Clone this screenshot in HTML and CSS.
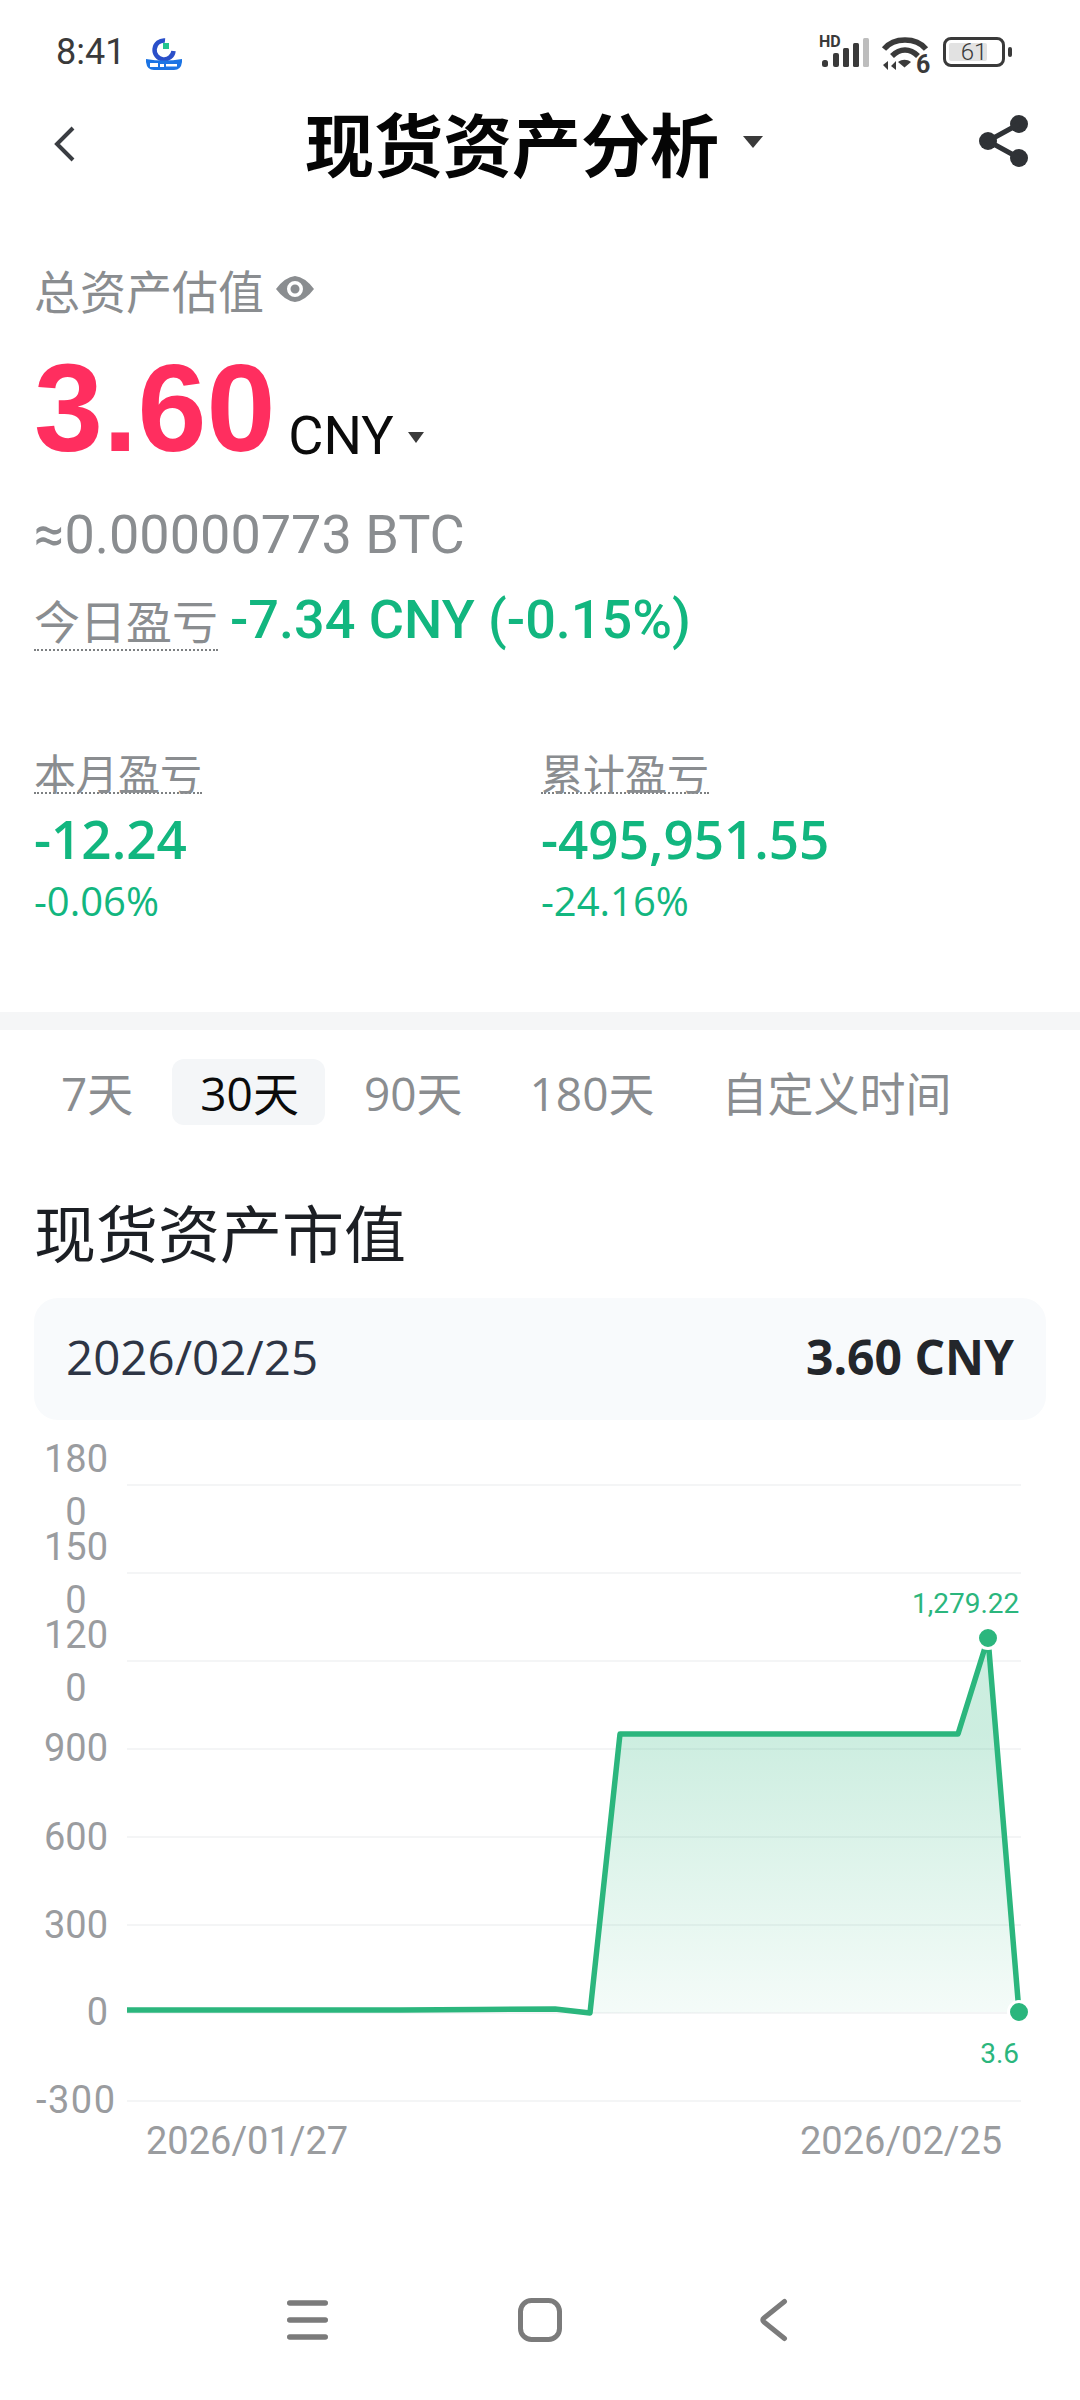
FILE: index.html
```html
<!DOCTYPE html>
<html lang="zh">
<head>
<meta charset="utf-8">
<title>现货资产分析</title>
<link rel="stylesheet" href="styles.css">
</head>
<body>
<div class="phone">
  <div class="status">
    <div class="status-left">
      <span class="clock">8:41</span>
      <svg class="applogo" width="38" height="33" viewBox="0 0 38 33"><path d="M20 3.500A9.500 9.500 0 1 0 28.500 14" fill="none" stroke="#2a4fc9" stroke-width="4.500"/><rect x="18" y="6" width="6" height="6" fill="#25c48e"/><path d="M1 22q18 3 36 0v3q-1 8-8 8H9q-7 0-8-8z" fill="#1b74e4"/><g fill="#fff"><rect x="5" y="26" width="8" height="4"/><rect x="15" y="27" width="4" height="3"/><rect x="21" y="27" width="11" height="2.500"/></g></svg>
    </div>
    <div class="status-right">
      <svg class="sig" width="52" height="36" viewBox="0 -4 52 36"><text x="1" y="10" class="hd">HD</text><g fill="#3a3a3a"><rect x="4" y="23" width="6" height="7" rx="2.500"/><rect x="15" y="16" width="6" height="14" rx="2"/><rect x="25" y="11" width="6" height="19" rx="1.500"/><rect x="35" y="6" width="6" height="24" rx="1.500"/></g><rect x="45" y="1" width="6" height="29" rx="1.500" fill="#bdbdbd"/></svg>
      <svg class="wifi" width="52" height="46" viewBox="0 0 52 46"><g fill="none" stroke="#3a3a3a" stroke-width="5.500"><path d="M4 14C14 2 36 2 46 14"/><path d="M12 21C20 13 30 13 38 21"/></g><path d="M18 27c4-3 9-3 13 0l-6.500 5.500z" fill="#3a3a3a"/><path d="M3 30l5-4v9zM16 26v9l-5-4z" fill="#3a3a3a"/><text x="36" y="38" class="six">6</text></svg>
      <div class="battery"><div class="batt-body"><span class="batt-fill"></span><span class="batt-num">61</span></div><span class="batt-tip"></span></div>
    </div>
  </div>

  <header class="nav">
    <svg class="back" width="24" height="38" viewBox="0 0 24 38"><path d="M21 3L5 19l16 16" fill="none" stroke="#3a3d42" stroke-width="4"/></svg>
    <div class="nav-title"><h1>现货资产分析</h1><span class="caret caret-title"></span></div>
    <svg class="share" width="50" height="54" viewBox="0 0 50 54"><g fill="#2f3236"><circle cx="40" cy="9" r="9"/><circle cx="9" cy="26" r="9"/><circle cx="40" cy="43" r="9"/></g><path d="M40 9L9 26l31 17" fill="none" stroke="#2f3236" stroke-width="5"/></svg>
  </header>

  <section class="summary">
    <div class="label-row"><span class="muted-label">总资产估值</span>
      <svg class="eye" width="38" height="26" viewBox="0 0 38 26"><path fill-rule="evenodd" d="M0 13Q9 1 19 0q10 1 19 13-9 12-19 13Q9 25 0 13zm19-8a8 8 0 1 0 0 16 8 8 0 0 0 0-16zm0 3.500a4.500 4.500 0 1 1 0 9 4.500 4.500 0 0 1 0-9z" fill="#8a8d90"/></svg>
    </div>
    <div class="value-row"><span class="big">3.60</span><span class="unit">CNY</span><span class="caret caret-unit"></span></div>
    <div class="btc">≈0.00000773 BTC</div>
    <div class="today"><span class="dotted today-label">今日盈亏</span><span class="today-val">-7.34 CNY (-0.15%)</span></div>
    <div class="pnl-grid">
      <div class="pnl">
        <span class="dotted pnl-label">本月盈亏</span>
        <span class="pnl-val">-12.24</span>
        <span class="pnl-pct">-0.06%</span>
      </div>
      <div class="pnl">
        <span class="dotted pnl-label">累计盈亏</span>
        <span class="pnl-val">-495,951.55</span>
        <span class="pnl-pct">-24.16%</span>
      </div>
    </div>
  </section>

  <div class="divider"></div>

  <nav class="tabs">
    <span class="tab">7天</span>
    <span class="tab active">30天</span>
    <span class="tab">90天</span>
    <span class="tab">180天</span>
    <span class="tab">自定义时间</span>
  </nav>

  <section class="market">
    <h2>现货资产市值</h2>
    <div class="date-card"><span class="date">2026/02/25</span><span class="amount">3.60 CNY</span></div>
    <div class="chart">
      <svg class="plot" width="1080" height="760" viewBox="0 0 1080 760">
        <defs><linearGradient id="area" gradientUnits="userSpaceOnUse" x1="0" y1="314" x2="0" y2="593"><stop offset="0" stop-color="#2bb67d" stop-opacity=".24"/><stop offset="1" stop-color="#2bb67d" stop-opacity=".05"/></linearGradient></defs>
        <path d="M127 65H1021M127 153H1021M127 241H1021M127 329H1021M127 417H1021M127 505H1021M127 593H1021M127 681H1021" stroke="#f4f5f6" stroke-width="2" fill="none"/>
        <path d="M590 593L620 314H958L988 218L1019 592z" fill="url(#area)"/>
        <path d="M127 590H400L480 589.500L555 589L590 593L620 314H958L988 218L1019 592" fill="none" stroke="#2bb67d" stroke-width="5.500" stroke-linejoin="round"/>
        <circle cx="988" cy="218" r="10.500" fill="#2bb67d" stroke="#fff" stroke-width="3"/>
        <circle cx="1019" cy="592" r="10.500" fill="#2bb67d" stroke="#fff" stroke-width="3"/>
      </svg>
      <span class="yl yl-wrap yl-1">180<br>0</span>
      <span class="yl yl-wrap yl-2">150<br>0</span>
      <span class="yl yl-wrap yl-3">120<br>0</span>
      <span class="yl yl-4">900</span>
      <span class="yl yl-5">600</span>
      <span class="yl yl-6">300</span>
      <span class="yl yl-7">0</span>
      <span class="yl yl-8">-300</span>
      <span class="peak">1,279.22</span>
      <span class="low">3.6</span>
      <span class="xl xl-a">2026/01/27</span>
      <span class="xl xl-b">2026/02/25</span>
    </div>
  </section>

  <footer class="softkeys">
    <svg class="key-menu" width="46" height="46" viewBox="0 0 46 46"><path d="M5.750 6H41.250M5.750 23H41.250M5.750 40H41.250" stroke="#7b7b7b" stroke-width="5.500" stroke-linecap="round" fill="none"/></svg>
    <svg class="key-home" width="44" height="46" viewBox="0 0 44 46"><rect x="2.500" y="3.500" width="39" height="39" rx="11" fill="none" stroke="#7b7b7b" stroke-width="5"/></svg>
    <svg class="key-back" width="30" height="46" viewBox="0 0 30 46"><path d="M26.500 4.500L6 21q-2.500 2 0 4L26.500 41.500" fill="none" stroke="#7b7b7b" stroke-width="5" stroke-linecap="round"/></svg>
  </footer>
</div>
</body>
</html>
```

FILE: styles.css
```css
* { box-sizing: border-box; }
html, body { margin: 0; padding: 0; background: #fff; }
body { font-family: "Liberation Sans", "Noto Sans CJK SC", sans-serif; }
h1, h2 { margin: 0; }
.phone { width: 1080px; height: 2400px; display: flex; flex-direction: column; overflow: hidden; background: #fff; }

.status { height: 92px; flex: none; padding: 30px 68px 0 56px; display: flex; justify-content: space-between; align-items: flex-start; }
.status-left { display: flex; align-items: center; gap: 20px; }
.clock { font: 400 36px/44px Roboto, sans-serif; color: #3a3a3a; }
.applogo { margin-top: 3px; }
.status-right { display: flex; align-items: flex-start; margin-top: 5px; height: 42px; }
.sig { margin-top: -2px; }
.wifi { margin-left: 10px; }
.hd { font: 700 16px Roboto, sans-serif; fill: #3a3a3a; }
.six { font: 700 25px Roboto, sans-serif; fill: #3a3a3a; }
.battery { display: flex; align-items: center; gap: 3px; margin: 2px 0 0 11px; }
.batt-body { width: 62px; height: 30px; border: 3px solid #3a3a3a; border-radius: 8px; position: relative; display: flex; align-items: center; justify-content: center; }
.batt-fill { position: absolute; left: 3px; top: 3px; bottom: 3px; width: 38px; background: #e2e2e2; border-radius: 2px; }
.batt-num { position: relative; font: 300 24px/24px Roboto, sans-serif; color: #3a3a3a; }
.batt-tip { width: 4px; height: 10px; background: #3a3a3a; border-radius: 2px; }

.nav { height: 106px; flex: none; padding: 0 51px 0 52px; display: flex; align-items: center; }
.back { flex: none; margin-top: -2px; }
.nav-title { display: flex; align-items: center; gap: 24px; margin-left: 229px; }
.nav h1 { font: 700 69px/84px "Noto Sans CJK SC", sans-serif; color: #050505; margin-top: -6px; }
.caret { display: inline-block; width: 0; height: 0; border-left: 10px solid transparent; border-right: 10px solid transparent; border-top: 12px solid #3a3a3a; }
.caret-title { margin-top: -6px; }
.share { flex: none; margin-left: auto; margin-top: -6px; }

.summary { padding: 61px 34px 0; display: flex; flex-direction: column; flex: none; }
.label-row { display: flex; align-items: center; gap: 12px; height: 60px; }
.muted-label { font: 400 46px/60px "Noto Sans CJK SC", sans-serif; color: #8a8d90; }
.value-row { display: flex; align-items: flex-end; height: 120px; margin-top: 29px; }
.big { font: 700 124px/120px "Liberation Sans", sans-serif; color: #ff2e5f; }
.unit { font: 400 54px/60px Roboto, sans-serif; color: #0b0b0b; margin: 0 0 2px 13px; }
.caret-unit { margin: 0 0 25px 14px; border-left-width: 8px; border-right-width: 8px; border-top-width: 11px; }
.btc { font: 400 54px/64px Roboto, sans-serif; color: #8a8d90; margin-top: 35px; }
.today { display: flex; align-items: center; gap: 12px; margin-top: 21px; height: 64px; }
.today-label { font: 400 46px/60px "Noto Sans CJK SC", sans-serif; color: #8a8d90; }
.today-val { font: 500 54px/60px Roboto, sans-serif; color: #12b67f; }
.dotted { border-bottom: 2px dotted #7d8082; }
.pnl-grid { display: grid; grid-template-columns: 507px 1fr; margin-top: 100px; }
.pnl { display: flex; flex-direction: column; align-items: flex-start; }
.pnl-label { font: 400 42px/40px "Noto Sans CJK SC", sans-serif; color: #8a8d90; }
.pnl-val { font: 600 53px/64px "Open Sans", sans-serif; color: #12b67f; margin-top: 13px; }
.pnl-pct { font: 400 40px/48px "Open Sans", sans-serif; color: #12b67f; margin-top: 6px; }

.divider { height: 18px; background: #f5f6f7; margin-top: 87px; flex: none; }

.tabs { display: flex; align-items: center; gap: 11px; height: 66px; flex: none; margin-top: 29px; padding-left: 33px; font-family: "Open Sans", "Noto Sans CJK SC", sans-serif; font-size: 46px; color: #8a8d90; }
.tab { height: 66px; line-height: 68px; padding: 0 28px; border-radius: 12px; white-space: nowrap; }
.tab.active { background: #f4f6f8; color: #0b0b0b; padding-right: 26px; }

.market { padding: 0 34px; display: flex; flex-direction: column; flex: none; }
.market h2 { font: 400 62px/80px "Noto Sans CJK SC", sans-serif; color: #1c1f24; margin-top: 66px; }
.date-card { height: 122px; background: #f8fafc; border-radius: 24px; margin-top: 27px; padding: 0 32px 4px; display: flex; align-items: center; justify-content: space-between; }
.date { font: 400 47.500px/60px "Open Sans", sans-serif; color: #2e3545; }
.amount { font: 700 48px/60px "Open Sans", sans-serif; color: #23262b; }
.chart { position: relative; height: 760px; margin: 0 -34px; }
.plot { display: block; }
.yl, .peak, .low, .xl { position: absolute; }
.yl { left: 36px; width: 72px; text-align: right; font: 400 38px/44px Roboto, sans-serif; color: #9a9c9f; }
.yl-wrap { left: 44px; width: 64px; text-align: center; line-height: 53px; }
.yl-1 { top: 13px; }
.yl-2 { top: 101px; }
.yl-3 { top: 189px; }
.yl-4 { top: 306px; }
.yl-5 { top: 395px; }
.yl-6 { top: 483px; }
.yl-7 { top: 570px; }
.yl-8 { top: 658px; width: 80px; letter-spacing: 1.500px; }
.peak { left: 912px; top: 166px; font: 400 28px/36px Roboto, sans-serif; color: #2bb67d; }
.low { right: 61px; top: 616px; font: 400 28px/36px Roboto, sans-serif; color: #2bb67d; }
.xl { top: 699px; font: 400 38px/44px Roboto, sans-serif; color: #9a9c9f; }
.xl-a { left: 146px; }
.xl-b { left: 800px; }

.softkeys { margin-top: auto; height: 103px; flex: none; padding-left: 284px; display: flex; align-items: flex-start; }
.key-home { margin-left: 188px; }
.key-back { margin-left: 196px; }
```
